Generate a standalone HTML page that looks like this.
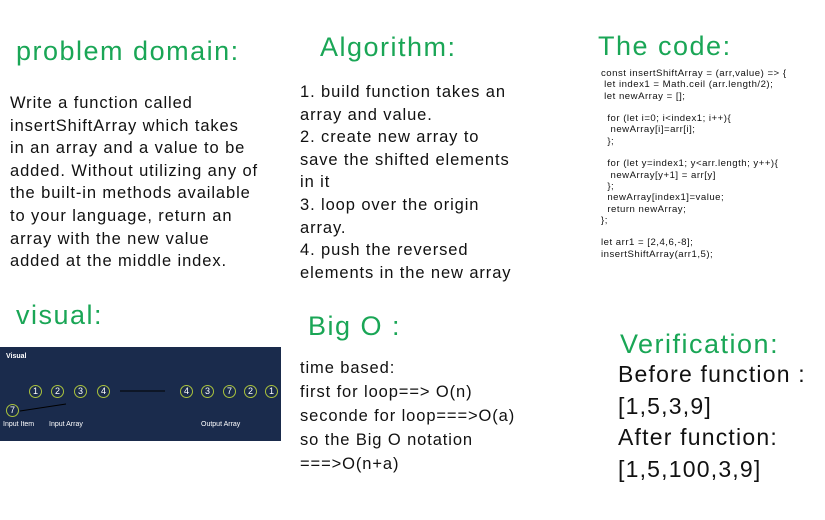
<!DOCTYPE html>
<html><head><meta charset="utf-8"><style>
body{margin:0;width:825px;height:520px;background:#fff;position:relative;overflow:hidden;font-family:"Liberation Sans",sans-serif;color:#111}
.a{position:absolute;white-space:pre}
.h{color:#1aa656;font-size:27px;letter-spacing:1.5px}
.t{font-size:16.5px;line-height:22.6px;letter-spacing:0.9px}
.c{font-size:9.6px;line-height:11.3px;letter-spacing:0.5px}
.v{font-size:23px;line-height:31.5px;letter-spacing:1.2px}
.panel{position:absolute;left:0;top:347px;width:281px;height:94px;background:#1a2b4c}
.n{position:absolute;width:11px;height:11px;border:1.3px solid #a9c23c;border-radius:50%;color:#fff;font-size:9px;line-height:11px;text-align:center}
.l{position:absolute;color:#fff;font-size:7px}
</style></head><body>
<div class="a h" style="left:16px;top:36px">problem domain:</div>
<div class="a t" style="left:10px;top:92px">Write a function called
insertShiftArray which takes
in an array and a value to be
added. Without utilizing any of
the built-in methods available
to your language, return an
array with the new value
added at the middle index.</div>
<div class="a h" style="left:320px;top:32px">Algorithm:</div>
<div class="a t" style="left:300px;top:81px">1. build function takes an
array and value.
2. create new array to
save the shifted elements
in it
3. loop over the origin
array.
4. push the reversed
elements in the new array</div>
<div class="a h" style="left:598px;top:31px">The code:</div>
<div class="a c" style="left:601px;top:68px">const insertShiftArray = (arr,value) => {
 let index1 = Math.ceil (arr.length/2);
 let newArray = [];

  for (let i=0; i&lt;index1; i++){
   newArray[i]=arr[i];
  };

  for (let y=index1; y&lt;arr.length; y++){
   newArray[y+1] = arr[y]
  };
  newArray[index1]=value;
  return newArray;
};

let arr1 = [2,4,6,-8];
insertShiftArray(arr1,5);</div>
<div class="a h" style="left:16px;top:300px">visual:</div>
<div class="panel">
<div class="l" style="left:6px;top:6px;font-weight:bold">Visual</div>
<div class="n" style="left:29px;top:38px">1</div>
<div class="n" style="left:51px;top:38px">2</div>
<div class="n" style="left:74px;top:38px">3</div>
<div class="n" style="left:97px;top:38px">4</div>
<div class="n" style="left:180px;top:38px">4</div>
<div class="n" style="left:201px;top:38px">3</div>
<div class="n" style="left:223px;top:38px">7</div>
<div class="n" style="left:244px;top:38px">2</div>
<div class="n" style="left:265px;top:38px">1</div>
<div class="n" style="left:6px;top:57px">7</div>
<svg style="position:absolute;left:0;top:0" width="281" height="94"><path d="M120 44H165M20 64L66 57" stroke="#000" stroke-width="1" fill="none"/></svg>
<div class="l" style="left:3px;top:74px">Input Item</div>
<div class="l" style="left:49px;top:74px">Input Array</div>
<div class="l" style="left:201px;top:74px">Output Array</div>
</div>
<div class="a h" style="left:308px;top:311px">Big O :</div>
<div class="a t" style="left:300px;top:356px;line-height:24px">time based:
first for loop==> O(n)
seconde for loop===>O(a)
so the Big O notation
===>O(n+a)</div>
<div class="a h" style="left:620px;top:329px">Verification:</div>
<div class="a v" style="left:618px;top:359px">Before function :
[1,5,3,9]
After function:
[1,5,100,3,9]</div>
</body></html>
